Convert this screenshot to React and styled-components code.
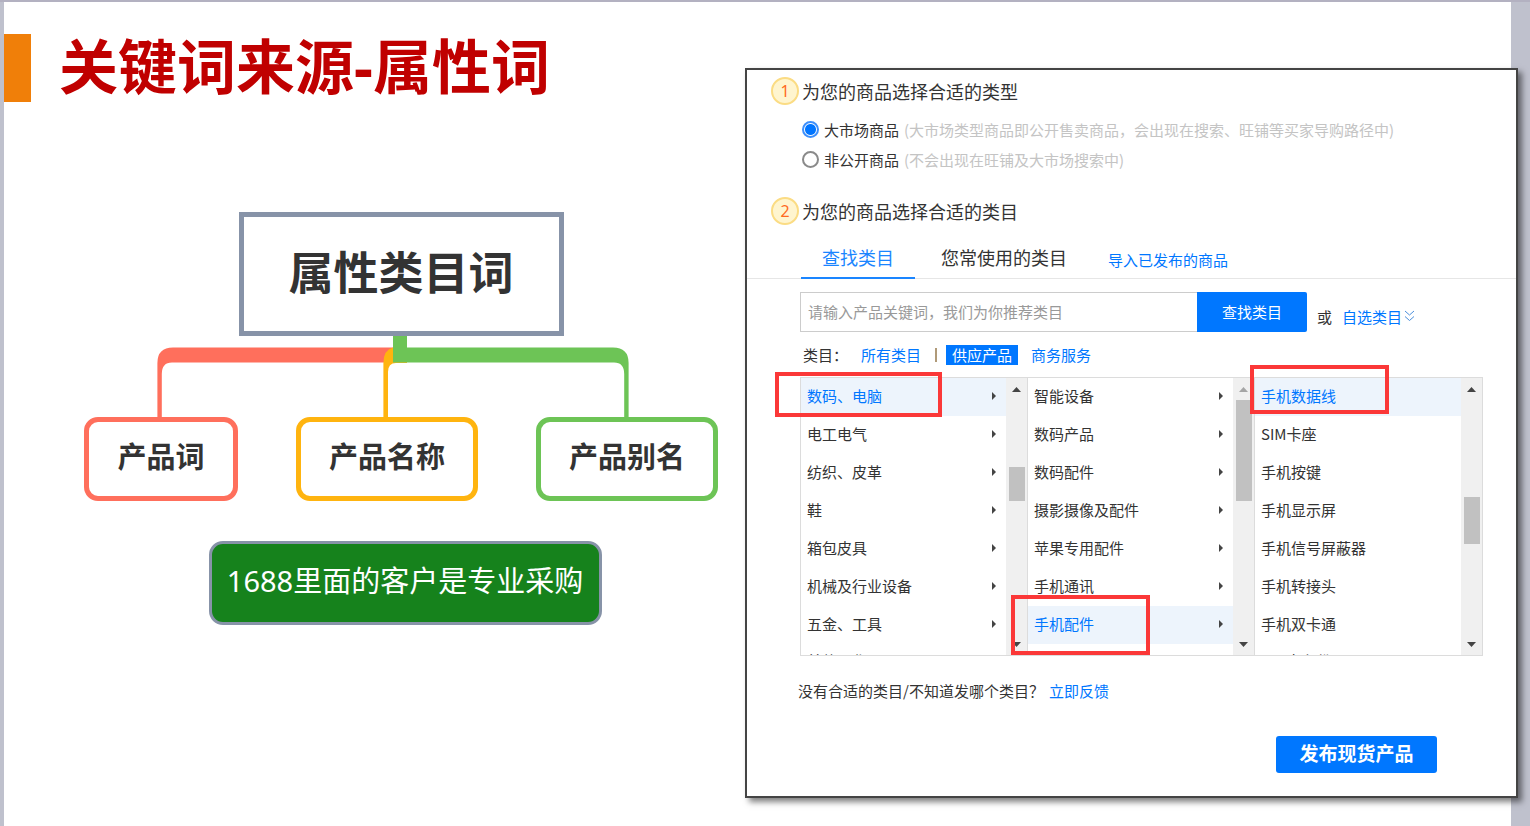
import React, { useState } from "react";
import styled, { createGlobalStyle } from "styled-components";

const GlobalStyle = createGlobalStyle`
  * {
    box-sizing: border-box;
  }
  body {
    margin: 0;
    background: #bfc1cd;
    font-family: "Noto Sans CJK SC", "Noto Sans", sans-serif;
    color: #333;
  }
  button, input {
    font-family: inherit;
  }
`;

const Stage = styled.div`
  min-height: 100vh;
  padding: 2px 19px 0 4px;
  background: linear-gradient(#b3b1c1 0 2px, transparent 2px);
`;

const Slide = styled.main`
  display: grid;
  grid-template-columns: minmax(0, 741fr) minmax(0, 766fr);
  align-items: start;
  min-height: calc(100vh - 2px);
  background: #fff;
`;

/* left half */

const Left = styled.section`
  padding-top: 32px;
`;

const Banner = styled.header`
  display: flex;
  align-items: center;
  gap: 28px;
  height: 68px;
`;

const Accent = styled.div`
  width: 27px;
  height: 68px;
  background: #f07f09;
`;

const Title = styled.h1`
  margin: 0;
  padding-bottom: 4px;
  font-family: "Noto Sans", "Noto Sans CJK SC", sans-serif;
  font-size: 59px;
  line-height: 60px;
  font-weight: 700;
  color: #c00000;
  white-space: nowrap;
`;

const Diagram = styled.div`
  display: flex;
  flex-direction: column;
  align-items: center;
  width: 634px;
  margin: 110px 27px 0 auto;
`;

const Node = styled.div`
  display: flex;
  align-items: center;
  justify-content: center;
  padding-bottom: 8px;
  white-space: nowrap;
`;

const RootNode = styled(Node)`
  width: 325px;
  height: 124px;
  border: 5px solid #8793a8;
  font-size: 45px;
  font-weight: 700;
`;

const Links = styled.svg`
  display: block;
  width: 634px;
  height: 81px;
`;

const Leaves = styled.div`
  display: flex;
  justify-content: space-between;
  width: 100%;
`;

const Leaf = styled(Node)`
  width: ${(props) => (props.$narrow ? "154px" : "182px")};
  height: 84px;
  border: 5px solid ${(props) => props.$color};
  border-radius: 14px;
  font-size: 29px;
  font-weight: 700;
`;

const Callout = styled(Node)`
  width: 393px;
  height: 84px;
  margin: 40px 0 0 8px;
  border: 3px solid #8793a8;
  border-radius: 14px;
  background: #16821c;
  color: #fff;
  font-family: "Noto Sans", "Noto Sans CJK SC", sans-serif;
  font-size: 29px;
`;

/* right half */

const Panel = styled.form`
  margin: 66px -7px 0 0;
  padding: 7px 0 23px;
  border: 2px solid #444;
  background: #fff;
  box-shadow: 4px 4px 6px rgba(0, 0, 0, 0.5);
  font-size: 15px;
`;

const Step = styled.h2`
  display: flex;
  align-items: center;
  gap: 3px;
  height: 28px;
  margin: 0 0 0 24px;
  font-size: 18px;
  font-weight: 400;
`;

const StepNumber = styled.span`
  display: flex;
  align-items: center;
  justify-content: center;
  width: 28px;
  height: 28px;
  border: 2px solid #fbdc84;
  border-radius: 50%;
  background: #fff5cf;
  color: #ff6a1f;
  font-family: "Noto Sans", sans-serif;
  font-size: 16px;
`;

const Options = styled.div`
  margin: 9px 0 23px 55px;
`;

const Option = styled.label`
  display: flex;
  align-items: center;
  gap: 5px;
  height: 30px;
  white-space: nowrap;
`;

const Radio = styled.input`
  appearance: none;
  width: 17px;
  height: 17px;
  margin: 0;
  border: 2px solid #8a8a8a;
  border-radius: 50%;
  &:checked {
    border-color: #3d8ffb;
    background: radial-gradient(#0075ff 0 5px, #fff 6px);
  }
`;

const Hint = styled.span`
  color: #c4c4c4;
`;

const Tabs = styled.nav`
  display: flex;
  gap: 5px;
  height: 42px;
  margin-top: 12px;
  padding-left: 54px;
  border-bottom: 1px solid #e6e6e6;
`;

const Tab = styled.button`
  height: 42px;
  padding: 0 21px;
  border: 0;
  border-bottom: 2px solid ${(props) => (props.$active ? "#1a85ff" : "transparent")};
  background: none;
  color: ${(props) => (props.$active ? "#1a85ff" : "#333")};
  font-size: 18px;
  white-space: nowrap;
`;

const Anchor = styled.a`
  color: #0077ff;
  text-decoration: none;
  white-space: nowrap;
`;

const TabLink = styled(Anchor)`
  margin-left: 15px;
  line-height: 46px;
`;

const Content = styled.div`
  padding: 0 33px 0 53px;
`;

const SearchRow = styled.div`
  display: flex;
  align-items: center;
  margin-top: 13px;
`;

const SearchInput = styled.input`
  flex: 0 1 397px;
  min-width: 0;
  height: 40px;
  padding: 0 7px 2px;
  border: 1px solid #ccc;
  border-right: 0;
  font-size: 15px;
  &::placeholder {
    color: #999;
  }
`;

const SearchButton = styled.button`
  width: 110px;
  height: 40px;
  padding: 0 0 2px;
  border: 0;
  border-radius: 0 2px 2px 0;
  background: #0077ff;
  color: #fff;
  font-size: 15px;
`;

const Pick = styled.div`
  display: flex;
  align-items: center;
  gap: 10px;
  padding: 8px 0 0 10px;
`;

const PickLink = styled(Anchor)`
  display: flex;
  align-items: center;
  gap: 2px;
`;

const Filter = styled.div`
  display: flex;
  align-items: center;
  height: 20px;
  margin: 13px 0 12px 3px;
  line-height: 20px;
`;

const FilterLink = styled(Anchor)`
  padding: 0 6px;
  margin-left: 7px;
  ${(props) => props.$active && "background: #0077ff; color: #fff;"}
`;

const Divider = styled.span`
  width: 2px;
  height: 14px;
  margin: 0 2px 0 8px;
  background: #b09a78;
`;

const Browser = styled.div`
  display: grid;
  grid-template-columns: repeat(3, 1fr);
  height: 279px;
  border: 1px solid #dcdcdc;
`;

const Column = styled.div`
  position: relative;
  display: flex;
  min-width: 0;
  height: 277px;
  border-right: 1px solid #dcdcdc;
  &:last-child {
    border-right: 0;
  }
`;

const List = styled.ul`
  flex: 1;
  min-width: 0;
  margin: 0;
  padding: 0;
  overflow: hidden;
  list-style: none;
`;

const Item = styled.button`
  display: flex;
  align-items: center;
  justify-content: space-between;
  width: 100%;
  height: 38px;
  padding: 0 10px 3px 6px;
  border: 0;
  background: ${(props) => (props.$active ? "#edf4fc" : "#fff")};
  color: ${(props) => (props.$active ? "#0077ff" : "#333")};
  font-size: 15px;
  white-space: nowrap;
  /* the row that peeks in at the bottom edge */
  li:nth-child(8) > & {
    height: 35px;
  }
`;

const Track = styled.div`
  display: flex;
  flex-direction: column;
  align-items: center;
  width: 21px;
  padding: 9px 0 8px;
  background: #f0f0f0;
`;

const Thumb = styled.div`
  width: 16px;
  height: ${(props) => props.$size}px;
  margin: ${(props) => props.$top}px 0 auto;
  background: #c1c1c1;
`;

const Mark = styled.div`
  position: absolute;
  z-index: 1;
  top: ${(props) => props.$top}px;
  left: ${(props) => props.$left}px;
  width: ${(props) => props.$width}px;
  height: ${(props) => props.$height}px;
  border: 4px solid #fb3838;
  pointer-events: none;
`;

const Feedback = styled.p`
  display: flex;
  gap: 5px;
  margin: 25px 0 35px -2px;
  line-height: 20px;
`;

const Actions = styled.div`
  display: flex;
  justify-content: flex-end;
  padding-right: 46px;
`;

const Publish = styled.button`
  width: 161px;
  height: 37px;
  padding: 0 0 4px;
  border: 0;
  border-radius: 3px;
  background: #0077ff;
  color: #fff;
  font-size: 19px;
  font-weight: 700;
`;

const columns = [
  {
    items: ["数码、电脑", "电工电气", "纺织、皮革", "鞋", "箱包皮具", "机械及行业设备", "五金、工具", "美妆日化"],
    active: "数码、电脑",
    nested: true,
    thumb: { top: 75, size: 34 },
    mark: { left: -26, top: -6, width: 167, height: 45 },
  },
  {
    items: ["智能设备", "数码产品", "数码配件", "摄影摄像及配件", "苹果专用配件", "手机通讯", "手机配件"],
    active: "手机配件",
    nested: true,
    atTop: true,
    thumb: { top: 8, size: 101 },
    mark: { left: -17, top: 217, width: 139, height: 60 },
  },
  {
    items: ["手机数据线", "SIM卡座", "手机按键", "手机显示屏", "手机信号屏蔽器", "手机转接头", "手机双卡通", "SIM卡备份器"],
    active: "手机数据线",
    thumb: { top: 105, size: 47 },
    mark: { left: -5, top: -13, width: 139, height: 49 },
  },
];

const Arrow = ({ down, color = "#444" }) => (
  <svg width="9" height="5" viewBox="0 0 9 5">
    <path d={down ? "M0 0h9L4.5 5z" : "M0 5h9L4.5 0z"} fill={color} />
  </svg>
);

const Caret = () => (
  <svg width="4" height="8" viewBox="0 0 4 8">
    <path d="M0 0L4 4L0 8z" fill="#444" />
  </svg>
);

const CategoryColumn = ({ column }) => {
  const [active, setActive] = useState(column.active);

  return (
    <Column>
      <List>
        {column.items.map((name) => (
          <li key={name}>
            <Item type="button" $active={name === active} onClick={() => setActive(name)}>
              {name}
              {column.nested && <Caret />}
            </Item>
          </li>
        ))}
      </List>
      <Track>
        <Arrow color={column.atTop ? "#a5a5a5" : "#444"} />
        <Thumb $top={column.thumb.top} $size={column.thumb.size} />
        <Arrow down />
      </Track>
      <Mark
        $left={column.mark.left}
        $top={column.mark.top}
        $width={column.mark.width}
        $height={column.mark.height}
      />
    </Column>
  );
};

const KeywordDiagram = () => (
  <Diagram>
    <RootNode>属性类目词</RootNode>
    <Links viewBox="0 0 634 81">
      <path
        fill="#ff6f5c"
        d="M73.4 81V27Q73.4 11.5 89 11.5H312V26.5H88Q77.8 26.5 77.8 38V81z"
      />
      <path
        fill="#ffb40f"
        d="M299.4 81V27Q299.4 14 309 11.5H323V27H312Q304 27 304 36V81z"
      />
      <path
        fill="#6dc456"
        d="M309 0H323V11.5H529Q544.6 11.5 544.6 27V81H540.2V38Q540.2 26.5 530 26.5H309z"
      />
    </Links>
    <Leaves>
      <Leaf $narrow $color="#ff6f5c">产品词</Leaf>
      <Leaf $color="#ffb40f">产品名称</Leaf>
      <Leaf $color="#6dc456">产品别名</Leaf>
    </Leaves>
    <Callout>1688里面的客户是专业采购</Callout>
  </Diagram>
);

const PublishPanel = () => {
  const [type, setType] = useState("market");
  const [keyword, setKeyword] = useState("");

  return (
    <Panel onSubmit={(e) => e.preventDefault()}>
      <Step>
        <StepNumber>1</StepNumber>
        为您的商品选择合适的类型
      </Step>
      <Options>
        <Option>
          <Radio type="radio" name="type" checked={type === "market"} onChange={() => setType("market")} />
          大市场商品
          <Hint>(大市场类型商品即公开售卖商品，会出现在搜索、旺铺等买家导购路径中)</Hint>
        </Option>
        <Option>
          <Radio type="radio" name="type" checked={type === "private"} onChange={() => setType("private")} />
          非公开商品
          <Hint>(不会出现在旺铺及大市场搜索中)</Hint>
        </Option>
      </Options>
      <Step>
        <StepNumber>2</StepNumber>
        为您的商品选择合适的类目
      </Step>
      <Tabs>
        <Tab type="button" $active>查找类目</Tab>
        <Tab type="button">您常使用的类目</Tab>
        <TabLink href="#import">导入已发布的商品</TabLink>
      </Tabs>
      <Content>
        <SearchRow>
          <SearchInput
            type="text"
            aria-label="产品关键词"
            placeholder="请输入产品关键词，我们为你推荐类目"
            value={keyword}
            onChange={(e) => setKeyword(e.target.value)}
          />
          <SearchButton type="submit">查找类目</SearchButton>
          <Pick>
            或
            <PickLink href="#pick">
              自选类目
              <svg width="11" height="12" viewBox="0 0 11 12" fill="none" stroke="#4a8fdc">
                <path d="M1 1L5.5 5L10 1M1 6.5L5.5 10.5L10 6.5" />
              </svg>
            </PickLink>
          </Pick>
        </SearchRow>
        <Filter>
          类目：
          <FilterLink href="#all">所有类目</FilterLink>
          <Divider />
          <FilterLink href="#supply" $active>供应产品</FilterLink>
          <FilterLink href="#service">商务服务</FilterLink>
        </Filter>
        <Browser>
          {columns.map((column) => (
            <CategoryColumn key={column.active} column={column} />
          ))}
        </Browser>
        <Feedback>
          没有合适的类目/不知道发哪个类目？
          <Anchor href="#feedback">立即反馈</Anchor>
        </Feedback>
        <Actions>
          <Publish type="submit">发布现货产品</Publish>
        </Actions>
      </Content>
    </Panel>
  );
};

const App = () => {
  return (
    <>
      <GlobalStyle />
      <Stage>
        <Slide>
          <Left>
            <Banner>
              <Accent />
              <Title>关键词来源-属性词</Title>
            </Banner>
            <KeywordDiagram />
          </Left>
          <PublishPanel />
        </Slide>
      </Stage>
    </>
  );
};

export default App;
